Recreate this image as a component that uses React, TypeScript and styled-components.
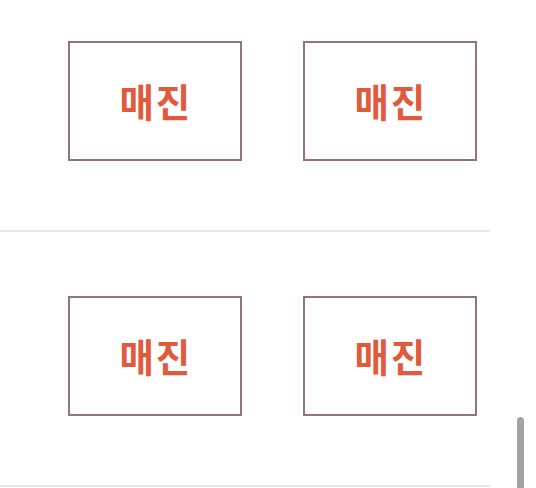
import styled, { createGlobalStyle } from 'styled-components'

const GlobalStyle = createGlobalStyle`
  html, body {
    margin: 0;
    padding: 0;
    background: #ffffff;
    overflow: hidden;
  }
  body {
    font-family: "Noto Sans CJK KR", "Noto Sans", sans-serif;
  }
`;

const Page = styled.div`
  position: relative;
  width: 536px;
  height: 488px;
  overflow: hidden;
  background: #fff;
`;

const List = styled.div`
  width: 490px;
  display: flex;
  flex-direction: column;
`;

const Section = styled.div<{ $top: number }>`
  display: flex;
  flex-direction: row;
  gap: 61px;
  padding: ${(p) => p.$top}px 0 69px 68px;
  border-bottom: 2px solid #e6e6e6;
`;

const SeatButton = styled.div`
  box-sizing: border-box;
  width: 174px;
  height: 120px;
  border: 2px solid #927479;
  display: flex;
  align-items: center;
  justify-content: center;
`;

const Label = styled.span`
  display: inline-block;
  color: #e25a3c;
  font-size: 39px;
  font-weight: 700;
  letter-spacing: 2px;
  padding-left: 2px;
  line-height: 1;
  transform: scaleX(0.96);
  margin-top: -2px;
`;

const ScrollThumb = styled.div`
  position: absolute;
  left: 517px;
  top: 417px;
  width: 7px;
  height: 90px;
  border-radius: 4px;
  background: #a3a3a3;
`;

const rows = [
  { top: 41, items: ['매진', '매진'] },
  { top: 64, items: ['매진', '매진'] },
];

function App() {
  return (
    <Page>
      <GlobalStyle />
      <List>
        {rows.map((row, i) => (
          <Section key={i} $top={row.top}>
            {row.items.map((label, j) => (
              <SeatButton key={j}>
                <Label>{label}</Label>
              </SeatButton>
            ))}
          </Section>
        ))}
      </List>
      <ScrollThumb />
    </Page>
  )
}

export default App
